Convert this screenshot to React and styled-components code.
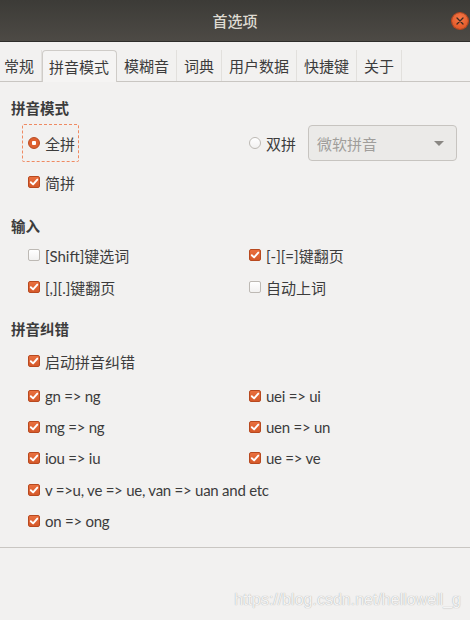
import styled, { createGlobalStyle } from 'styled-components';

const GlobalStyle = createGlobalStyle`
    html, body {
        margin: 0;
        padding: 0;
        background: #f2f1f0;
    }
    body {
        font-family: Lato, "Noto Sans CJK SC", sans-serif;
        color: #3c3c3c;
    }
`

const tabs = ['常规', '拼音模式', '模糊音', '词典', '用户数据', '快捷键', '关于'];

const Check = ({ checked }) => (
    <Box checked={checked}>
        {checked && (
            <svg width="10" height="10" viewBox="0 0 10 10">
                <path d="M1.8 5.2 L4.1 7.4 L8.3 2.6" fill="none" stroke="#fff" strokeWidth="1.9" strokeLinecap="round" strokeLinejoin="round" />
            </svg>
        )}
    </Box>
);

const Item = ({ checked, latin, children }) => (
    <Option latin={latin}>
        <Check checked={checked} />
        <span>{children}</span>
    </Option>
);

const App = () => {
    return (
        <Window>
            <GlobalStyle />
            <TitleBar>
                <Title>首选项</Title>
                <CloseButton>
                    <svg width="8" height="8" viewBox="0 0 8 8">
                        <path d="M1 1 L7 7 M7 1 L1 7" stroke="#3a2a22" strokeWidth="1.3" strokeLinecap="round" />
                    </svg>
                </CloseButton>
            </TitleBar>

            <TabBar>
                {tabs.map((t, i) => (
                    <Tab key={t} active={i === 1} first={i === 0}>{t}</Tab>
                ))}
            </TabBar>

            <Content>
                <Header>拼音模式</Header>
                <Grid gap={5}>
                    <FocusBox>
                        <Radio checked />
                        <span>全拼</span>
                    </FocusBox>
                    <Option>
                        <Radio />
                        <span>双拼</span>
                        <Combo>
                            <span>微软拼音</span>
                            <Arrow />
                        </Combo>
                    </Option>
                </Grid>
                <Grid gap={8}>
                    <Item checked>简拼</Item>
                </Grid>

                <Header gap={23}>输入</Header>
                <Grid gap={6}>
                    <Item>[Shift]键选词</Item>
                    <Item checked>[-][=]键翻页</Item>
                </Grid>
                <Grid gap={8}>
                    <Item checked>[,][.]键翻页</Item>
                    <Item>自动上词</Item>
                </Grid>

                <Header gap={21}>拼音纠错</Header>
                <Grid gap={9}>
                    <Item checked>启动拼音纠错</Item>
                </Grid>
                <Grid gap={11}>
                    <Item checked latin>gn =&gt; ng</Item>
                    <Item checked latin>uei =&gt; ui</Item>
                </Grid>
                <Grid gap={7}>
                    <Item checked latin>mg =&gt; ng</Item>
                    <Item checked latin>uen =&gt; un</Item>
                </Grid>
                <Grid gap={7}>
                    <Item checked latin>iou =&gt; iu</Item>
                    <Item checked latin>ue =&gt; ve</Item>
                </Grid>
                <Grid gap={8}>
                    <Item checked latin>v =&gt;u, ve =&gt; ue, van =&gt; uan and etc</Item>
                </Grid>
                <Grid gap={7}>
                    <Item checked latin>on =&gt; ong</Item>
                </Grid>
            </Content>
            <Divider />

            <Watermark>https://blog.csdn.net/hellowell_g</Watermark>
        </Window>
    );
}

const Window = styled.div`
    position: relative;
    width: 470px;
    height: 620px;
    overflow: hidden;
    background: #f2f1f0;
`

const TitleBar = styled.div`
    height: 42px;
    display: flex;
    align-items: center;
    justify-content: center;
    background: linear-gradient(to bottom, #3c3b37, #4d4a45);
    border-bottom: 1px solid #2e2d2a;
    box-sizing: border-box;
`

const Title = styled.div`
    color: #dfdbd2;
    font-size: 15px;
    font-weight: 500;
`

const CloseButton = styled.div`
    position: absolute;
    right: 2px;
    top: 13px;
    width: 16px;
    height: 16px;
    border-radius: 50%;
    background: radial-gradient(circle at 50% 35%, #f5794a, #df4f1c);
    box-shadow: 0 0 0 1px #c2451b;
    display: flex;
    align-items: center;
    justify-content: center;
`

const TabBar = styled.div`
    display: flex;
    align-items: flex-end;
    height: 40px;
    border-bottom: 1px solid #c9c6c2;
    box-sizing: border-box;
`

const Tab = styled.div`
    height: 31px;
    display: flex;
    align-items: center;
    padding-left: ${(props) => props.first ? '4px' : '7px'};
    padding-right: 7px;
    font-size: 15px;
    color: #3c3c3c;
    box-sizing: border-box;
    border-right: 1px solid #e2e0dd;
    ${(props) => props.active && `
        background: #f5f4f3;
        border: 1px solid #cfccc8;
        border-bottom: none;
        border-radius: 4px 4px 0 0;
        margin-bottom: -1px;
        height: 32px;
        padding-left: 6px;
    `}
`

const Content = styled.div`
    padding: 17px 0 0 11px;
`

const Header = styled.div`
    margin-top: ${(props) => props.gap || 0}px;
    height: 20px;
    line-height: 20px;
    font-size: 14.5px;
    font-weight: 700;
    color: #3c3c3c;
`

const Grid = styled.div`
    display: grid;
    grid-template-columns: 221px 1fr;
    padding-left: 17px;
    margin-top: ${(props) => props.gap || 0}px;
    min-height: 24px;
    align-items: center;
`

const Option = styled.div`
    display: flex;
    align-items: center;
    gap: 5px;
    font-size: 15px;
    letter-spacing: ${(props) => props.latin ? '-0.25px' : '0'};
    color: #3c3c3c;
    white-space: nowrap;
    height: 24px;
`

const FocusBox = styled(Option)`
    height: 38px;
    width: 57px;
    box-sizing: border-box;
    margin-left: -6px;
    padding-left: 5px;
    border: 1px dashed #ef8a62;
    border-radius: 2px;
`

const Box = styled.div`
    width: 12px;
    height: 12px;
    box-sizing: border-box;
    border-radius: 2px;
    display: flex;
    align-items: center;
    justify-content: center;
    flex-shrink: 0;
    background: ${(props) => props.checked ? 'linear-gradient(to bottom, #e9703f, #d5592a)' : 'linear-gradient(to bottom, #ffffff, #f2f1f0)'};
    border: 1px solid ${(props) => props.checked ? '#b8491f' : '#bdb9b4'};
`

const Radio = styled.div`
    width: 12px;
    height: 12px;
    box-sizing: border-box;
    border-radius: 50%;
    flex-shrink: 0;
    border: 1px solid ${(props) => props.checked ? '#b8491f' : '#bdb9b4'};
    background: ${(props) => props.checked
        ? 'radial-gradient(circle, #fff 0 2px, #de6030 2.5px)'
        : 'linear-gradient(to bottom, #ffffff, #f2f1f0)'};
`

const Combo = styled.div`
    margin-left: 7px;
    width: 149px;
    height: 36px;
    box-sizing: border-box;
    border: 1px solid #c7c4c0;
    border-radius: 4px;
    background: #ebeae8;
    display: flex;
    align-items: center;
    justify-content: space-between;
    padding: 0 12px 0 8px;
    color: #a09e9b;
    font-size: 15px;
`

const Arrow = styled.div`
    width: 0;
    height: 0;
    border-left: 5px solid transparent;
    border-right: 5px solid transparent;
    border-top: 5px solid #8a8783;
`

const Divider = styled.div`
    margin-top: 14px;
    height: 1px;
    background: #c9c6c2;
`

const Watermark = styled.div`
    position: absolute;
    right: 9px;
    top: 591px;
    font-family: "Liberation Sans", sans-serif;
    font-size: 16px;
    color: #f4f4f4;
    text-shadow: 0 0 1px #9a9a9a;
`

export default App;
